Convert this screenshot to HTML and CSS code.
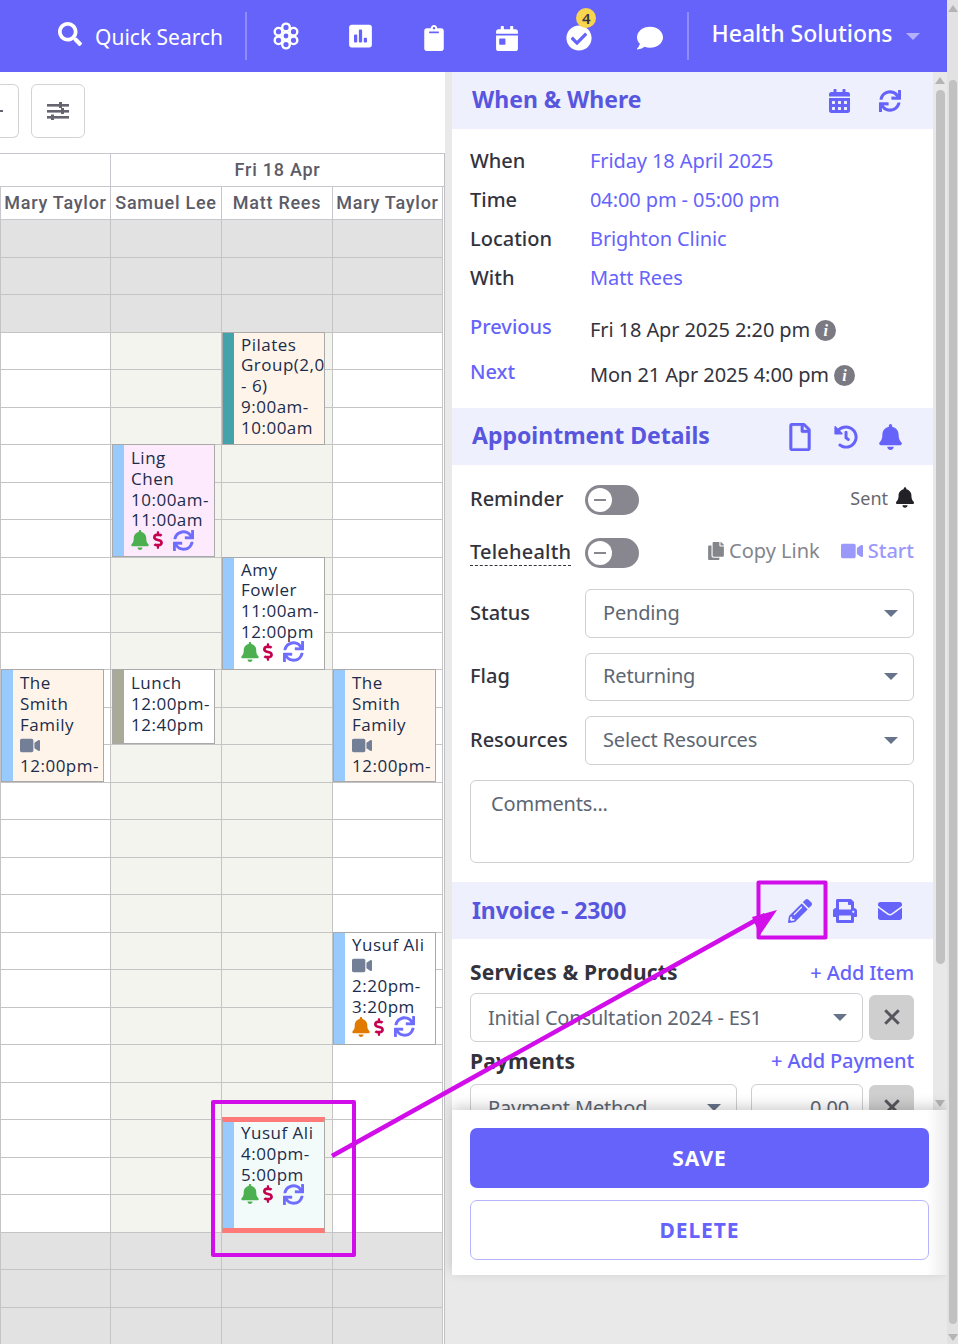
FILE: index.html
```html
<!DOCTYPE html>
<html lang="en">
<head>
<meta charset="utf-8">
<title>Appointment</title>
<link rel="stylesheet" href="styles.css">
</head>
<body>
<svg class="defs" width="0" height="0" aria-hidden="true">
  <symbol id="i-search" viewBox="0 0 512 512"><path d="M505 442.7L405.3 343c-4.5-4.5-10.6-7-17-7H372c27.6-35.3 44-79.7 44-128C416 93.1 322.9 0 208 0S0 93.1 0 208s93.1 208 208 208c48.3 0 92.7-16.4 128-44v16.3c0 6.4 2.5 12.5 7 17l99.7 99.7c9.4 9.4 24.6 9.4 33.9 0l28.3-28.3c9.4-9.4 9.4-24.6.1-34zM208 336c-70.7 0-128-57.2-128-128 0-70.7 57.2-128 128-128 70.7 0 128 57.2 128 128 0 70.7-57.2 128-128 128z"/></symbol>
  <symbol id="i-bell" viewBox="0 0 448 512"><path d="M224 512c35.32 0 63.97-28.65 63.97-64H160.03c0 35.35 28.65 64 63.97 64zm215.39-149.71c-19.32-20.76-55.47-51.99-55.47-154.29 0-77.7-54.48-139.9-127.94-155.16V32c0-17.67-14.32-32-31.98-32s-31.98 14.33-31.98 32v20.84C118.56 68.1 64.08 130.3 64.08 208c0 102.3-36.15 133.53-55.47 154.29-6 6.45-8.66 14.16-8.61 21.71.11 16.4 12.98 32 32.1 32h383.8c19.12 0 32-15.6 32.1-32 .05-7.55-2.61-15.27-8.61-21.71z"/></symbol>
  <symbol id="i-sync" viewBox="0 0 512 512"><path d="M440.65 12.57l4 82.77A247.16 247.16 0 0 0 255.83 8C134.73 8 33.91 94.92 12.29 209.82A12 12 0 0 0 24.09 224h49.05a12 12 0 0 0 11.67-9.26 175.91 175.91 0 0 1 317-56.94l-101.46-4.86a12 12 0 0 0-12.57 12v47.41a12 12 0 0 0 12 12H500a12 12 0 0 0 12-12V12a12 12 0 0 0-12-12h-47.37a12 12 0 0 0-11.98 12.57zM255.83 432a175.61 175.61 0 0 1-146-77.8l101.8 4.87a12 12 0 0 0 12.57-12v-47.4a12 12 0 0 0-12-12H12a12 12 0 0 0-12 12V500a12 12 0 0 0 12 12h47.35a12 12 0 0 0 12-12.6l-4.15-82.57A247.17 247.17 0 0 0 255.83 504c121.11 0 221.93-86.92 243.55-201.82a12 12 0 0 0-11.8-14.18h-49.05a12 12 0 0 0-11.67 9.26A175.86 175.86 0 0 1 255.83 432z"/></symbol>
  <symbol id="i-dollar" viewBox="0 0 320 512"><path d="M209.2 233.4l-108-31.6C88.7 198.2 80 186.5 80 173.5c0-16.3 13.2-29.5 29.5-29.5h66.3c12.2 0 24.2 3.7 34.2 10.5 6.1 4.1 14.3 3.1 19.5-2l34.8-34c7.1-6.9 6.1-18.4-1.8-24.5C238 74.8 207.4 64.1 176 64V16c0-8.8-7.2-16-16-16h-32c-8.8 0-16 7.2-16 16v48h-2.5C45.8 64-5.4 118.7.5 183.6c4.2 46.1 39.4 83.6 83.8 96.6l102.5 30c12.5 3.7 21.2 15.3 21.2 28.3 0 16.3-13.2 29.5-29.5 29.5h-66.3C100 368 88 364.3 78 357.5c-6.1-4.1-14.3-3.1-19.5 2l-34.8 34c-7.1 6.9-6.1 18.4 1.8 24.5 24.5 19.2 55.1 29.9 86.5 30v48c0 8.8 7.2 16 16 16h32c8.8 0 16-7.2 16-16v-48.2c46.6-.9 90.3-28.6 105.7-72.7 21.5-61.6-14.6-124.8-72.5-141.7z"/></symbol>
  <symbol id="i-video" viewBox="0 0 576 512"><path d="M336.2 64H47.8C21.4 64 0 85.4 0 111.8v288.4C0 426.6 21.4 448 47.8 448h288.4c26.4 0 47.8-21.4 47.8-47.8V111.8c0-26.4-21.4-47.8-47.8-47.8zm189.4 37.7L416 177.3v157.4l109.6 75.5c21.2 14.6 50.4-.3 50.4-25.8V127.5c0-25.4-29.1-40.4-50.4-25.8z"/></symbol>
  <symbol id="i-pencil" viewBox="0 0 512 512"><path d="M497.9 142.1l-46.1 46.1c-4.7 4.7-12.3 4.7-17 0l-111-111c-4.7-4.7-4.7-12.3 0-17l46.1-46.1c18.7-18.7 49.1-18.7 67.9 0l60.1 60.1c18.8 18.7 18.8 49.1 0 67.9zM284.2 99.8L21.6 362.4.4 483.9c-2.9 16.4 11.4 30.6 27.8 27.8l121.5-21.3 262.6-262.6c4.7-4.7 4.7-12.3 0-17l-111-111c-4.8-4.7-12.4-4.7-17.1 0zM124.1 339.9c-5.5-5.5-5.5-14.3 0-19.8l154-154c5.5-5.5 14.3-5.5 19.8 0s5.5 14.3 0 19.8l-154 154c-5.5 5.5-14.3 5.5-19.8 0zM88 424h48v36.3l-64.5 11.3-31.1-31.1L51.7 376H88v48z"/></symbol>
  <symbol id="i-print" viewBox="0 0 512 512"><path d="M448 192V77.25c0-8.49-3.37-16.62-9.37-22.63L393.37 9.37c-6-6-14.14-9.37-22.63-9.37H96C78.33 0 64 14.33 64 32v160c-35.35 0-64 28.65-64 64v112c0 8.84 7.16 16 16 16h48v96c0 17.67 14.33 32 32 32h320c17.67 0 32-14.33 32-32v-96h48c8.84 0 16-7.16 16-16V256c0-35.35-28.65-64-64-64zm-64 256H128v-96h256v96zm0-224H128V64h192v48c0 8.84 7.16 16 16 16h48v96zm48 72c-13.25 0-24-10.75-24-24 0-13.26 10.75-24 24-24s24 10.74 24 24c0 13.25-10.75 24-24 24z"/></symbol>
  <symbol id="i-envelope" viewBox="0 0 512 512"><path d="M502.3 190.8c3.9-3.1 9.7-.2 9.7 4.7V400c0 26.5-21.5 48-48 48H48c-26.5 0-48-21.5-48-48V195.6c0-5 5.7-7.8 9.7-4.7 22.4 17.4 52.1 39.5 154.1 113.6 21.1 15.4 56.7 47.8 92.2 47.6 35.7.3 72-32.8 92.3-47.6 102-74.1 131.6-96.3 154-113.7zM256 320c23.2.4 56.6-29.2 73.4-41.4 132.7-96.3 142.8-104.7 173.4-128.7 5.8-4.5 9.2-11.5 9.2-18.9v-19c0-26.5-21.5-48-48-48H48C21.5 64 0 85.5 0 112v19c0 7.4 3.4 14.3 9.2 18.9 30.6 23.9 40.7 32.4 173.4 128.7 16.8 12.2 50.2 41.8 73.4 41.4z"/></symbol>
  <symbol id="i-calendar" viewBox="0 0 448 512"><path d="M0 464c0 26.5 21.5 48 48 48h352c26.5 0 48-21.5 48-48V192H0v272zm320-196c0-6.6 5.4-12 12-12h40c6.6 0 12 5.4 12 12v40c0 6.6-5.4 12-12 12h-40c-6.6 0-12-5.4-12-12v-40zm0 128c0-6.6 5.4-12 12-12h40c6.6 0 12 5.4 12 12v40c0 6.6-5.4 12-12 12h-40c-6.6 0-12-5.4-12-12v-40zM192 268c0-6.6 5.4-12 12-12h40c6.6 0 12 5.4 12 12v40c0 6.6-5.4 12-12 12h-40c-6.6 0-12-5.4-12-12v-40zm0 128c0-6.6 5.4-12 12-12h40c6.6 0 12 5.4 12 12v40c0 6.6-5.4 12-12 12h-40c-6.6 0-12-5.4-12-12v-40zM64 268c0-6.6 5.4-12 12-12h40c6.6 0 12 5.4 12 12v40c0 6.6-5.4 12-12 12H76c-6.6 0-12-5.4-12-12v-40zm0 128c0-6.6 5.4-12 12-12h40c6.6 0 12 5.4 12 12v40c0 6.6-5.4 12-12 12H76c-6.6 0-12-5.4-12-12v-40zM400 64h-48V16c0-8.8-7.2-16-16-16h-32c-8.8 0-16 7.2-16 16v48H160V16c0-8.8-7.2-16-16-16h-32c-8.8 0-16 7.2-16 16v48H48C21.5 64 0 85.5 0 112v48h448v-48c0-26.5-21.5-48-48-48z"/></symbol>
  <symbol id="i-calday" viewBox="0 0 448 512"><path d="M0 464c0 26.5 21.5 48 48 48h352c26.5 0 48-21.5 48-48V192H0v272zm64-192c0-8.8 7.2-16 16-16h96c8.8 0 16 7.2 16 16v96c0 8.8-7.2 16-16 16H80c-8.8 0-16-7.2-16-16v-96zM400 64h-48V16c0-8.8-7.2-16-16-16h-32c-8.8 0-16 7.2-16 16v48H160V16c0-8.8-7.2-16-16-16h-32c-8.8 0-16 7.2-16 16v48H48C21.5 64 0 85.5 0 112v48h448v-48c0-26.5-21.5-48-48-48z"/></symbol>
  <symbol id="i-clip" viewBox="0 0 384 512"><path d="M384 112v352c0 26.51-21.49 48-48 48H48c-26.51 0-48-21.49-48-48V112c0-26.51 21.49-48 48-48h80c0-35.29 28.71-64 64-64s64 28.71 64 64h80c26.51 0 48 21.49 48 48zM192 40c-13.255 0-24 10.745-24 24s10.745 24 24 24 24-10.745 24-24-10.745-24-24-24m96 114v-20a6 6 0 0 0-6-6H102a6 6 0 0 0-6 6v20a6 6 0 0 0 6 6h180a6 6 0 0 0 6-6z"/></symbol>
  <symbol id="i-poll" viewBox="0 0 448 512"><path d="M400 32H48C21.5 32 0 53.5 0 80v352c0 26.5 21.5 48 48 48h352c26.5 0 48-21.5 48-48V80c0-26.5-21.5-48-48-48zM160 368c0 8.84-7.16 16-16 16h-32c-8.84 0-16-7.16-16-16V240c0-8.84 7.16-16 16-16h32c8.84 0 16 7.16 16 16v128zm96 0c0 8.84-7.16 16-16 16h-32c-8.84 0-16-7.16-16-16V144c0-8.84 7.16-16 16-16h32c8.84 0 16 7.16 16 16v224zm96 0c0 8.84-7.16 16-16 16h-32c-8.84 0-16-7.16-16-16v-64c0-8.84 7.16-16 16-16h32c8.84 0 16 7.16 16 16v64z"/></symbol>
  <symbol id="i-check" viewBox="0 0 512 512"><path d="M504 256c0 136.967-111.033 248-248 248S8 392.967 8 256 119.033 8 256 8s248 111.033 248 248zM227.314 387.314l184-184c6.248-6.248 6.248-16.379 0-22.627l-22.627-22.627c-6.248-6.249-16.379-6.249-22.628 0L216 308.118l-70.059-70.059c-6.248-6.248-16.379-6.248-22.628 0l-22.627 22.627c-6.248 6.248-6.248 16.379 0 22.627l104 104c6.249 6.249 16.379 6.249 22.628.001z"/></symbol>
  <symbol id="i-comment" viewBox="0 0 512 512"><path d="M256 32C114.6 32 0 125.1 0 240c0 49.6 21.4 95 57 130.7C44.5 421.1 2.7 466 2.2 466.5c-2.2 2.3-2.8 5.7-1.5 8.7S4.8 480 8 480c66.3 0 116-31.8 140.6-51.4 32.7 12.3 69 19.4 107.4 19.4 141.4 0 256-93.1 256-208S397.4 32 256 32z"/></symbol>
  <symbol id="i-history" viewBox="0 0 512 512"><path d="M504 255.531c.253 136.64-111.18 248.372-247.82 248.468-59.015.042-113.223-20.53-155.822-54.911-11.077-8.94-11.905-25.541-1.839-35.607l11.267-11.267c8.609-8.609 22.353-9.551 31.891-1.984C173.062 425.135 212.781 440 256 440c101.705 0 184-82.311 184-184 0-101.705-82.311-184-184-184-48.814 0-93.149 18.969-126.068 49.932l50.754 50.754c10.08 10.08 2.941 27.314-11.313 27.314H24c-8.837 0-16-7.163-16-16V38.627c0-14.254 17.234-21.393 27.314-11.314l49.372 49.372C129.209 34.136 189.552 8 256 8c136.81 0 247.747 110.78 248 247.531zm-180.912 78.784l9.823-12.63c8.138-10.463 6.253-25.542-4.21-33.679L288 256.349V152c0-13.255-10.745-24-24-24h-16c-13.255 0-24 10.745-24 24v135.651l65.409 50.874c10.463 8.137 25.541 6.253 33.679-4.21z"/></symbol>
  <symbol id="i-file" viewBox="0 0 384 512"><path d="M369.9 97.9L286 14C277 5 264.8-.1 252.1-.1H48C21.5 0 0 21.5 0 48v416c0 26.5 21.5 48 48 48h288c26.5 0 48-21.5 48-48V131.9c0-12.7-5.1-25-14.1-34zM332.1 128H256V51.9l76.1 76.1zM48 464V48h160v104c0 13.3 10.7 24 24 24h104v288H48z"/></symbol>
  <symbol id="i-copy" viewBox="0 0 448 512"><path d="M320 448v40c0 13.255-10.745 24-24 24H24c-13.255 0-24-10.745-24-24V120c0-13.255 10.745-24 24-24h72v296c0 30.879 25.121 56 56 56h168zm0-344V0H152c-13.255 0-24 10.745-24 24v368c0 13.255 10.745 24 24 24h272c13.255 0 24-10.745 24-24V128H344c-13.2 0-24-10.8-24-24zm120.971-31.029L375.029 7.029A24 24 0 0 0 358.059 0H352v96h96v-6.059a24 24 0 0 0-7.029-16.97z"/></symbol>
</svg>

<div class="page">
  <div class="main">
    <header class="topbar">
      <svg class="ic ic-search"><use href="#i-search"/></svg>
      <span class="search-text">Quick Search</span>
      <span class="divider"></span>
      <nav class="nav">
        <span class="nav-item">
          <svg class="ic-flower" viewBox="0 0 28 28" fill="none" stroke="#fff" stroke-width="2.4">
            <circle cx="14" cy="14" r="3.6"/><circle cx="14" cy="5.4" r="3.8"/><circle cx="14" cy="22.6" r="3.8"/><circle cx="6.5" cy="9.7" r="3.8"/><circle cx="21.5" cy="9.7" r="3.8"/><circle cx="6.5" cy="18.3" r="3.8"/><circle cx="21.5" cy="18.3" r="3.8"/>
          </svg>
        </span>
        <span class="nav-item"><svg class="ic ic-poll"><use href="#i-poll"/></svg></span>
        <span class="nav-item"><svg class="ic ic-clip"><use href="#i-clip"/></svg></span>
        <span class="nav-item"><svg class="ic ic-calday"><use href="#i-calday"/></svg></span>
        <span class="nav-item nav-badge"><svg class="ic ic-check"><use href="#i-check"/></svg><span class="badge">4</span></span>
        <span class="nav-item"><svg class="ic ic-comment"><use href="#i-comment"/></svg></span>
      </nav>
      <span class="divider divider-2"></span>
      <span class="brand">Health Solutions</span>
      <span class="brand-caret"></span>
    </header>

    <div class="content">
      <section class="calendar">
        <div class="toolbar">
          <div class="tool tool-cut"><span class="tool-dash"></span></div>
          <div class="tool">
            <svg class="ic-sliders" viewBox="0 0 22 18" fill="#66656f">
              <rect x="0" y="2" width="22" height="2.6"/><rect x="0" y="8" width="22" height="2.6"/><rect x="0" y="14" width="22" height="2.6"/>
              <rect x="12" y="0" width="3" height="6"/><rect x="14" y="6" width="3" height="6"/><rect x="4" y="12.5" width="3" height="5.5"/>
            </svg>
          </div>
        </div>
        <div class="cal-grid">
          <div class="date-row">
            <div class="date-cell date-blank"></div>
            <div class="date-cell date-main">Fri 18 Apr</div>
          </div>
          <div class="name-row">
            <div class="name-cell">Mary Taylor</div>
            <div class="name-cell">Samuel Lee</div>
            <div class="name-cell">Matt Rees</div>
            <div class="name-cell">Mary Taylor</div>
          </div>
          <div class="cols">
            <div class="col col-first">
              <div class="cells"><div class="cell"></div><div class="cell"></div><div class="cell"></div><div class="cell"></div><div class="cell"></div><div class="cell"></div><div class="cell"></div><div class="cell"></div><div class="cell"></div><div class="cell"></div><div class="cell"></div><div class="cell"></div><div class="cell"></div><div class="cell"></div><div class="cell"></div><div class="cell"></div><div class="cell"></div><div class="cell"></div><div class="cell"></div><div class="cell"></div><div class="cell"></div><div class="cell"></div><div class="cell"></div><div class="cell"></div><div class="cell"></div><div class="cell"></div><div class="cell"></div><div class="cell"></div><div class="cell"></div><div class="cell"></div></div>
              <article class="event ev-peach at-13">
                <span class="ev-bar bar-blue"></span>
                <div class="ev-body">The<br>Smith<br>Family<svg class="ev-video"><use href="#i-video"/></svg>12:00pm-</div>
              </article>
            </div>
            <div class="col col-off col-second">
              <div class="cells"><div class="cell"></div><div class="cell"></div><div class="cell"></div><div class="cell"></div><div class="cell"></div><div class="cell"></div><div class="cell"></div><div class="cell"></div><div class="cell"></div><div class="cell"></div><div class="cell"></div><div class="cell"></div><div class="cell"></div><div class="cell"></div><div class="cell"></div><div class="cell"></div><div class="cell"></div><div class="cell"></div><div class="cell"></div><div class="cell"></div><div class="cell"></div><div class="cell"></div><div class="cell"></div><div class="cell"></div><div class="cell"></div><div class="cell"></div><div class="cell"></div><div class="cell"></div><div class="cell"></div><div class="cell"></div></div>
              <article class="event ev-pink at-7">
                <span class="ev-bar bar-blue"></span>
                <div class="ev-body">Ling<br>Chen<br>10:00am-<br>11:00am
                  <div class="ev-icons"><svg class="ev-bell bell-green"><use href="#i-bell"/></svg><svg class="ev-dollar"><use href="#i-dollar"/></svg><svg class="ev-sync"><use href="#i-sync"/></svg></div>
                </div>
              </article>
              <article class="event ev-white ev-short at-13">
                <span class="ev-bar bar-olive"></span>
                <div class="ev-body">Lunch<br>12:00pm-<br>12:40pm</div>
              </article>
            </div>
            <div class="col col-off">
              <div class="cells"><div class="cell"></div><div class="cell"></div><div class="cell"></div><div class="cell"></div><div class="cell"></div><div class="cell"></div><div class="cell"></div><div class="cell"></div><div class="cell"></div><div class="cell"></div><div class="cell"></div><div class="cell"></div><div class="cell"></div><div class="cell"></div><div class="cell"></div><div class="cell"></div><div class="cell"></div><div class="cell"></div><div class="cell"></div><div class="cell"></div><div class="cell"></div><div class="cell"></div><div class="cell"></div><div class="cell"></div><div class="cell"></div><div class="cell"></div><div class="cell"></div><div class="cell"></div><div class="cell"></div><div class="cell"></div></div>
              <article class="event ev-peach at-4">
                <span class="ev-bar bar-teal"></span>
                <div class="ev-body">Pilates<br>Group(2,0<br>- 6)<br>9:00am-<br>10:00am</div>
              </article>
              <article class="event ev-white at-10">
                <span class="ev-bar bar-blue"></span>
                <div class="ev-body">Amy<br>Fowler<br>11:00am-<br>12:00pm
                  <div class="ev-icons"><svg class="ev-bell bell-green"><use href="#i-bell"/></svg><svg class="ev-dollar"><use href="#i-dollar"/></svg><svg class="ev-sync"><use href="#i-sync"/></svg></div>
                </div>
              </article>
              <article class="event ev-mint ev-selected at-25">
                <span class="ev-bar bar-blue"></span>
                <div class="ev-body">Yusuf Ali<br>4:00pm-<br>5:00pm
                  <div class="ev-icons"><svg class="ev-bell bell-green"><use href="#i-bell"/></svg><svg class="ev-dollar"><use href="#i-dollar"/></svg><svg class="ev-sync"><use href="#i-sync"/></svg></div>
                </div>
              </article>
            </div>
            <div class="col">
              <div class="cells"><div class="cell"></div><div class="cell"></div><div class="cell"></div><div class="cell"></div><div class="cell"></div><div class="cell"></div><div class="cell"></div><div class="cell"></div><div class="cell"></div><div class="cell"></div><div class="cell"></div><div class="cell"></div><div class="cell"></div><div class="cell"></div><div class="cell"></div><div class="cell"></div><div class="cell"></div><div class="cell"></div><div class="cell"></div><div class="cell"></div><div class="cell"></div><div class="cell"></div><div class="cell"></div><div class="cell"></div><div class="cell"></div><div class="cell"></div><div class="cell"></div><div class="cell"></div><div class="cell"></div><div class="cell"></div></div>
              <article class="event ev-peach at-13">
                <span class="ev-bar bar-blue"></span>
                <div class="ev-body">The<br>Smith<br>Family<svg class="ev-video"><use href="#i-video"/></svg>12:00pm-</div>
              </article>
              <article class="event ev-white at-20">
                <span class="ev-bar bar-blue"></span>
                <div class="ev-body">Yusuf Ali<svg class="ev-video"><use href="#i-video"/></svg>2:20pm-<br>3:20pm
                  <div class="ev-icons"><svg class="ev-bell bell-orange"><use href="#i-bell"/></svg><svg class="ev-dollar"><use href="#i-dollar"/></svg><svg class="ev-sync"><use href="#i-sync"/></svg></div>
                </div>
              </article>
            </div>
          </div>
        </div>
      </section>

      <aside class="side">
        <div class="side-scroll">
          <div class="panel">
            <div class="sec-head">
              <h2 class="sec-title">When &amp; Where</h2>
              <div class="sec-icons">
                <svg class="ic sec-ic ic-cal"><use href="#i-calendar"/></svg>
                <svg class="ic sec-ic ic-resync"><use href="#i-sync"/></svg>
              </div>
            </div>
            <div class="when-body">
              <div class="info-row"><span class="label">When</span><span class="link">Friday 18 April 2025</span></div>
              <div class="info-row"><span class="label">Time</span><span class="link">04:00 pm - 05:00 pm</span></div>
              <div class="info-row"><span class="label">Location</span><span class="link">Brighton Clinic</span></div>
              <div class="info-row"><span class="label">With</span><span class="link">Matt Rees</span></div>
              <div class="nav-row nav-row-first"><span class="label link-label">Previous</span><span class="nav-value">Fri 18 Apr 2025 2:20 pm<span class="info-dot">i</span></span></div>
              <div class="nav-row"><span class="label link-label">Next</span><span class="nav-value">Mon 21 Apr 2025 4:00 pm<span class="info-dot">i</span></span></div>
            </div>

            <div class="sec-head">
              <h2 class="sec-title">Appointment Details</h2>
              <div class="sec-icons">
                <svg class="ic sec-ic ic-file"><use href="#i-file"/></svg>
                <svg class="ic sec-ic ic-sq"><use href="#i-history"/></svg>
                <svg class="ic sec-ic ic-bellh"><use href="#i-bell"/></svg>
              </div>
            </div>
            <div class="details-body">
              <div class="toggle-row">
                <span class="label field-label">Reminder</span>
                <span class="toggle"><span class="knob"></span></span>
                <span class="sent">Sent<svg class="ic ic-sent"><use href="#i-bell"/></svg></span>
              </div>
              <div class="toggle-row toggle-row-2">
                <span class="label field-label"><span class="dashed">Telehealth</span></span>
                <span class="toggle"><span class="knob"></span></span>
                <span class="tele-actions">
                  <span class="copy"><svg class="ic ic-copy"><use href="#i-copy"/></svg>Copy Link</span>
                  <span class="start"><svg class="ic ic-start"><use href="#i-video"/></svg>Start</span>
                </span>
              </div>
              <div class="form-row form-row-first"><span class="label field-label">Status</span><div class="select grow"><span>Pending</span><span class="caret"></span></div></div>
              <div class="form-row"><span class="label field-label">Flag</span><div class="select grow"><span>Returning</span><span class="caret"></span></div></div>
              <div class="form-row"><span class="label field-label">Resources</span><div class="select grow"><span>Select Resources</span><span class="caret"></span></div></div>
              <div class="comments">Comments...</div>
            </div>

            <div class="sec-head">
              <h2 class="sec-title sec-title-inv">Invoice - 2300</h2>
              <div class="sec-icons">
                <svg class="ic sec-ic ic-sq"><use href="#i-pencil"/></svg>
                <svg class="ic sec-ic ic-sq"><use href="#i-print"/></svg>
                <svg class="ic sec-ic ic-sq"><use href="#i-envelope"/></svg>
              </div>
            </div>
            <div class="invoice-body">
              <div class="inv-head"><span class="inv-title">Services &amp; Products</span><span class="inv-add">+ Add Item</span></div>
              <div class="inv-line">
                <div class="select grow"><span>Initial Consultation 2024 - ES1</span><span class="caret"></span></div>
                <span class="remove"><svg class="x-ic" viewBox="0 0 16 16"><path d="M2 2L14 14M14 2L2 14"/></svg></span>
              </div>
              <div class="inv-head inv-head-2"><span class="inv-title">Payments</span><span class="inv-add">+ Add Payment</span></div>
              <div class="inv-line inv-line-pay">
                <div class="select pay-method"><span>Payment Method</span><span class="caret"></span></div>
                <div class="select pay-amount">0.00</div>
                <span class="remove"><svg class="x-ic" viewBox="0 0 16 16"><path d="M2 2L14 14M14 2L2 14"/></svg></span>
              </div>
            </div>
          </div>
          <div class="panel-bar">
            <span class="arrow-up"></span>
            <span class="bar-thumb"></span>
            <span class="arrow-down"></span>
          </div>
        </div>
        <footer class="actions">
          <div class="btn btn-save">SAVE</div>
          <div class="btn btn-delete">DELETE</div>
        </footer>
      </aside>
    </div>
  </div>
  <div class="page-bar">
    <span class="arrow-up"></span>
    <span class="page-thumb"></span>
    <span class="arrow-down"></span>
  </div>
</div>

<svg class="annot" viewBox="0 0 958 1344" aria-hidden="true">
  <rect class="annot-box" x="213" y="1102" width="141" height="153"/>
  <rect class="annot-box" x="758.5" y="882.5" width="67" height="55"/>
  <path class="annot-line" d="M332 1156L765 915"/>
  <path class="annot-head" d="M777 910L752 917L760 935Z"/>
</svg>
</body>
</html>
```
FILE: styles.css
```css
* { box-sizing: border-box; }
html, body { margin: 0; padding: 0; height: 1344px; overflow: hidden; background: #fff; }
body { font-family: "Noto Sans", "Open Sans", sans-serif; color: #33333d; position: relative; }
.defs { position: absolute; }
.ic { display: block; fill: currentColor; }

.page { display: flex; width: 958px; height: 1344px; }
.main { width: 947px; display: flex; flex-direction: column; }

/* top bar */
.topbar { height: 72px; background: #6663fb; color: #fff; display: flex; align-items: center; padding-left: 58px; flex: none; }
.ic-search { width: 24px; height: 24px; margin-top: -4px; }
.search-text { font-size: 21px; margin-left: 13px; width: 150px; padding-top: 2px; }
.divider { width: 2px; height: 48px; background: #8f8dfc; flex: none; }
.nav { display: flex; margin-left: 3px; }
.nav-item { width: 72.6px; height: 40px; display: flex; align-items: center; justify-content: center; position: relative; }
.ic-flower { width: 28px; height: 28px; }
.ic-poll { width: 23px; height: 26px; margin-top: -1px; margin-left: 4px; }
.ic-clip { width: 20px; height: 26px; margin-top: 4px; margin-left: 6px; }
.ic-calday { width: 22px; height: 25px; margin-top: 4px; margin-left: 6px; }
.ic-check { width: 26px; height: 26px; margin-top: 4px; margin-left: 4px; }
.ic-comment { width: 26px; height: 26px; margin-top: 4px; margin-left: 2px; }
.badge { position: absolute; left: 36px; top: -8px; width: 20px; height: 20px; border-radius: 50%; background: #f8d54f; color: #333348; font-size: 15px; font-weight: 600; line-height: 20px; text-align: center; }
.divider-2 { margin-left: 1px; }
.brand { font-size: 23px; font-weight: 500; margin-left: 23px; margin-top: -6px; }
.brand-caret { width: 0; height: 0; border: 7px solid transparent; border-top-color: #b3b1fd; border-bottom: 0; margin-left: 13px; }

.content { display: flex; flex: 1; min-height: 0; }

/* calendar */
.calendar { width: 445px; flex: none; overflow: hidden; background: #fff; }
.toolbar { height: 81px; display: flex; gap: 12px; padding-top: 12px; }
.tool { width: 54px; height: 54px; border: 1px solid #d3d3d3; border-radius: 6px; display: flex; align-items: center; justify-content: center; }
.tool-cut { width: 19px; border-left: 0; border-radius: 0 6px 6px 0; justify-content: flex-start; }
.tool-dash { width: 3px; height: 2px; background: #66656f; }
.ic-sliders { width: 22px; height: 18px; }

.cal-grid { width: 445px; border-right: 1px solid #c0c0c4; }
.date-row, .name-row { display: grid; grid-template-columns: 111px 111px 111px 110px; height: 33px; font-family: Roboto, sans-serif; font-weight: 500; font-size: 18px; color: #5c5b66; letter-spacing: .75px; }
.date-row { border-top: 1px solid #c6c6cc; height: 34px; grid-template-columns: 111px 333px; }
.date-cell, .name-cell { display: flex; align-items: center; justify-content: center; border-right: 1px solid #c6c6cc; border-bottom: 1px solid #c6c6cc; white-space: nowrap; padding-bottom: 2px; }
.date-main { border-right: 0; }
.name-cell:first-child { border-left: 1px solid #c6c6cc; }

.cols { display: grid; grid-template-columns: 111px 111px 111px 110px; }
.col { display: grid; grid-template-rows: repeat(30, 37.5px); background: #fff; }
.col-off { background: #f4f4ef; }
.cells { grid-row: 1 / -1; grid-column: 1; display: flex; flex-direction: column; }
.cell { height: 37.5px; flex: none; border-right: 1px solid #c4c4c4; border-bottom: 1px solid #c4c4c4; }
.col-first .cell { border-left: 1px solid #c4c4c4; }
.cell:nth-child(-n+3), .cell:nth-child(n+28) { background: #e2e2e2; }

/* events */
.event { grid-column: 1; width: 103px; height: 113px; margin-top: -1px; align-self: start; z-index: 1; display: flex; border: 1px solid #a9a9a9; overflow: hidden; font-family: "Open Sans", "Noto Sans", sans-serif; font-size: 17px; line-height: 20.8px; color: #1b2c4c; letter-spacing: .5px; }
.col-first .event, .col-second .event { margin-left: 1px; }
.ev-short { height: 75px; }
.ev-bar { width: 11px; flex: none; }
.ev-body { padding: 3px 0 0 7px; white-space: nowrap; }
.at-4 .ev-body, .at-10 .ev-body, .at-20 .ev-body { padding-top: 2px; }
.ev-selected .ev-body { padding-top: 1px; }
.bar-blue { background: #99cafd; }
.bar-teal { background: #44a2aa; }
.bar-olive { background: #a9ab98; }
.ev-peach { background: #fff4e9; }
.ev-pink { background: #fdeafd; }
.ev-white { background: #fff; }
.ev-mint { background: #f2fbfa; }
.ev-selected { height: 116px; margin-top: -3px; border-top: 5px solid #fd7a78; border-bottom: 5px solid #fd7a78; }
.at-4 { grid-row: 4 / span 3; }
.at-7 { grid-row: 7 / span 3; }
.at-10 { grid-row: 10 / span 3; }
.at-13 { grid-row: 13 / span 3; }
.at-20 { grid-row: 20 / span 3; }
.at-25 { grid-row: 25 / span 3; }
.ev-video { display: block; width: 20px; height: 21px; fill: #727f97; }
.ev-icons { display: flex; align-items: center; height: 20px; margin-top: -1px; }
.ev-icons svg { display: block; }
.ev-bell { width: 18px; height: 20px; }
.bell-green { fill: #4caf50; }
.bell-orange { fill: #e07a00; }
.ev-dollar { width: 11px; height: 20px; margin-left: 4px; fill: #c4004f; }
.ev-sync { width: 21px; height: 21px; margin-left: 9px; fill: #6f6dfd; }

/* side */
.side { width: 502px; flex: none; background: #e9e9e9; padding-left: 7px; display: flex; flex-direction: column; overflow: hidden; }
.side-scroll { display: flex; height: 1038px; flex: none; overflow: hidden; }
.panel { width: 481px; flex: none; background: #fff; }
.sec-head { height: 57px; background: #eef0fd; display: flex; align-items: center; justify-content: space-between; padding: 0 31px 0 20px; }
.sec-title { margin: 0; font-size: 23px; font-weight: 700; color: #5856df; padding-bottom: 3px; }
.sec-title-inv { padding-bottom: 1px; letter-spacing: -.1px; }
.sec-icons { display: flex; align-items: center; gap: 21px; color: #6663fb; }
.ic-sq { width: 24px; height: 24px; }
.ic-resync { width: 22px; height: 22px; margin-right: 1px; }
.ic-cal { width: 21px; height: 24px; margin-right: 8px; }
.ic-file { width: 22px; height: 28px; margin-right: 2px; stroke: currentColor; stroke-width: 8px; }
.ic-bellh { width: 23px; height: 26px; }

.label { font-size: 20px; color: #33333d; font-weight: 500; }
.when-body { height: 279px; padding: 12px 18px 0; }
.info-row { display: flex; height: 39px; align-items: center; }
.info-row .label { width: 120px; }
.link { font-size: 20px; color: #6663fb; letter-spacing: -.1px; }
.nav-row { display: flex; height: 45px; align-items: flex-start; }
.nav-row-first { margin-top: 8px; }
.link-label { width: 120px; color: #6663fb; font-weight: 500; padding-top: 8px; }
.nav-value { font-size: 20px; color: #33333d; padding-top: 11px; display: flex; align-items: center; letter-spacing: -.1px; }
.info-dot { width: 21px; height: 21px; margin-left: 5px; border-radius: 50%; background: #7b7a83; color: #fff; font-family: "Liberation Serif", serif; font-style: italic; font-weight: 700; font-size: 16px; line-height: 21px; text-align: center; margin-top: 2px; letter-spacing: 0; }

.details-body { padding: 20px 19px 0 18px; height: 417px; }
.toggle-row { display: flex; align-items: center; height: 30px; }
.toggle-row-2 { margin-top: 23px; }
.toggle-row .field-label { padding-bottom: 3px; }
.field-label { width: 115px; flex: none; padding-bottom: 2px; }
.toggle { width: 54px; height: 30px; border-radius: 15px; background: #88878f; display: flex; align-items: center; padding-left: 3px; flex: none; }
.knob { width: 24px; height: 24px; border-radius: 50%; background: #fff; display: flex; align-items: center; justify-content: center; }
.knob::before { content: ""; width: 12px; height: 2px; background: #88878f; }
.sent { margin-left: auto; font-size: 18px; color: #67676e; display: flex; align-items: center; padding-bottom: 4px; }
.ic-sent { width: 18px; height: 21px; margin-left: 8px; color: #222226; margin-top: -1px; }
.dashed { border-bottom: 1px dashed #33333d; display: inline-block; line-height: 26px; letter-spacing: .2px; }
.tele-actions { margin-left: auto; display: flex; font-size: 20px; padding-bottom: 5px; }
.copy { display: flex; align-items: center; color: #85858c; }
.ic-copy { width: 16px; height: 18px; margin-right: 5px; }
.start { display: flex; align-items: center; color: #9a98fb; margin-left: 21px; font-weight: 500; }
.ic-start { width: 22px; height: 20px; margin-right: 5px; }

.form-row { display: flex; align-items: center; margin-top: 15px; }
.form-row-first { margin-top: 21px; }
.select { height: 48.5px; border: 1px solid #cfcfd4; border-radius: 6px; display: flex; align-items: center; justify-content: space-between; padding: 0 15px 2px 17px; font-size: 20px; color: #5d6673; background: #fff; letter-spacing: -.17px; }
.inv-line .select { padding-bottom: 0; }
.inv-line .caret { margin-top: 0; }
.grow { flex: 1; min-width: 0; }
.caret { width: 0; height: 0; border: 7px solid transparent; border-top: 7px solid #67738a; border-bottom: 0; margin-top: 2px; }
.comments { height: 83px; margin-top: 15px; border: 1px solid #cfcfd4; border-radius: 6px; padding: 9px 20px; font-size: 20px; color: #5d6673; letter-spacing: -.17px; }

.invoice-body { padding: 18px 19px 0 18px; }
.inv-head { display: flex; justify-content: space-between; align-items: center; height: 30px; }
.inv-head-2 { margin-top: 4px; }
.inv-title { font-size: 21px; font-weight: 700; color: #33333d; letter-spacing: .15px; }
.inv-add { font-size: 20px; font-weight: 500; color: #6663fb; letter-spacing: -.12px; }
.inv-line { display: flex; align-items: center; gap: 6px; margin-top: 6px; }
.inv-line-pay { align-items: flex-start; margin-top: 8px; }
.remove { width: 45px; height: 45px; border-radius: 6px; background: #cfcfcf; display: flex; align-items: center; justify-content: center; flex: none; }
.inv-line-pay .remove { margin-top: 1px; }
.x-ic { width: 18px; height: 18px; fill: none; stroke: #55555c; stroke-width: 2.6; }
.pay-method { width: 267px; flex: none; }
.pay-amount { width: 112px; flex: none; margin-left: 8px; justify-content: flex-end; padding-right: 13px; }

.panel-bar, .page-bar { display: flex; flex-direction: column; align-items: center; }
.panel-bar { width: 14px; background: #e8e8e8; flex: none; padding-top: 5px; }
.page-bar { width: 11px; background: #e2e2e2; flex: none; padding-top: 5px; }
.arrow-up { width: 0; height: 0; border: 5px solid transparent; border-bottom: 7px solid #b4b4b4; border-top: 0; flex: none; }
.arrow-down { width: 0; height: 0; border: 5px solid transparent; border-top: 7px solid #b4b4b4; border-bottom: 0; flex: none; margin-top: auto; margin-bottom: 3px; }
.bar-thumb { width: 9px; height: 874px; margin-top: 6px; border-radius: 5px; background: #c1c1c1; flex: none; }
.page-thumb { width: 8px; height: 1244px; margin-top: 68px; border-radius: 4px; background: #c1c1c1; flex: none; }

/* footer */
.actions { height: 165px; flex: none; background: linear-gradient(to right, #fff 96%, #ececec); padding: 18px 18px 0; box-shadow: 0 -4px 12px rgba(0,0,0,.18); position: relative; display: flex; flex-direction: column; gap: 12px; }
.btn { height: 60px; border-radius: 7px; display: flex; align-items: center; justify-content: center; font-size: 21px; font-weight: 700; letter-spacing: .9px; padding-bottom: 1px; }
.btn-save { background: #6663fb; color: #fff; }
.btn-delete { border: 1px solid #b6b4fd; color: #6663fb; background: #fff; }

/* annotation overlay */
.annot { position: absolute; left: 0; top: 0; width: 958px; height: 1344px; pointer-events: none; z-index: 5; }
.annot-box { fill: none; stroke: #d10de9; stroke-width: 4; stroke-linejoin: round; }
.annot-line { fill: none; stroke: #d10de9; stroke-width: 4.5; }
.annot-head { fill: #d10de9; }
```
